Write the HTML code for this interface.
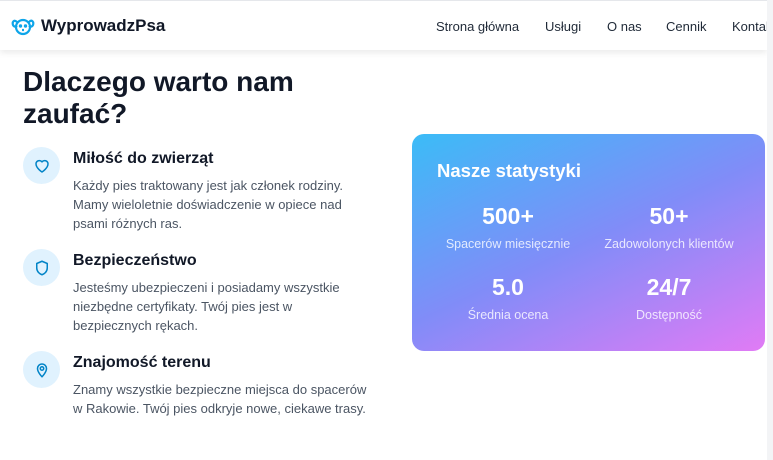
<!DOCTYPE html>
<html><head><meta charset="utf-8"><style>
*{margin:0;padding:0;box-sizing:border-box}
body{width:773px;height:460px;overflow:hidden;background:#fff;font-family:"Liberation Sans",sans-serif;position:relative;color:#111827}
.hdr{position:absolute;left:0;top:0;width:767px;height:50px;background:#fff;border-top:1px solid #e5e7eb;box-shadow:0 3px 6px rgba(0,0,0,.08);z-index:2}
.sb{position:absolute;right:0;top:0;width:6px;height:460px;background:#f3f4f6;z-index:3}
.logo{position:absolute;left:11px;top:13px}
.brand{position:absolute;left:41px;top:15px;font-size:17px;font-weight:bold;color:#111827}
.nav a{position:absolute;top:18px;font-size:13px;color:#1f2937;text-decoration:none;white-space:nowrap}
h1{position:absolute;left:23px;top:66px;font-size:28px;line-height:32px;font-weight:bold;color:#111827}
.it{position:absolute;left:23px}
.ic{position:absolute;left:0;top:0;width:37px;height:37px;border-radius:50%;background:#e0f2fe;display:flex;align-items:center;justify-content:center}
.t{position:absolute;left:50px;top:3px;font-size:16px;font-weight:bold;color:#111827;white-space:nowrap}
.d{position:absolute;left:50px;top:29px;white-space:nowrap;font-size:13px;line-height:19px;color:#4b5563}
.card{position:absolute;left:412px;top:134px;width:353px;height:217px;border-radius:12px;background:linear-gradient(155deg,#3bbcf7 0%,#818cf8 50%,#e17bf5 100%);color:#fff}
.card h2{position:absolute;left:25px;top:26px;font-size:18.5px;font-weight:bold}
.s{position:absolute;width:170px;text-align:center}
.s b{display:block;font-size:23px;line-height:26px}
.s span{display:block;font-size:12.5px;margin-top:8px;color:rgba(255,255,255,.8)}
</style></head><body>
<div class="hdr">
<svg class="logo" width="24" height="24" viewBox="0 0 24 24" fill="none" stroke="#0ea5e9" stroke-width="2.2"><circle cx="12" cy="13" r="7"/><path d="M6 8C3 5 1 8 2 11c1 2 3 2 4 1M18 8c3-3 5 0 4 3-1 2-3 2-4 1"/><circle cx="9.5" cy="12" r=".6" fill="#0ea5e9"/><circle cx="14.5" cy="12" r=".6" fill="#0ea5e9"/><path d="M11 16h2" /></svg>
<div class="brand">WyprowadzPsa</div>
<div class="nav"><a style="left:436px">Strona główna</a><a style="left:545px">Usługi</a><a style="left:607px">O nas</a><a style="left:666px">Cennik</a><a style="left:732px">Kontakt</a></div>
</div>
<div class="sb"></div>
<h1>Dlaczego warto nam<br>zaufać?</h1>
<div class="it" style="top:147px"><div class="ic"><svg width="18" height="18" viewBox="0 0 24 24" fill="none" stroke="#0284c7" stroke-width="2" stroke-linejoin="round"><path d="M12 20s-8-5-8-11a4.5 4.5 0 0 1 8-2.5A4.5 4.5 0 0 1 20 9c0 6-8 11-8 11z"/></svg></div><div class="t">Miłość do zwierząt</div><div class="d">Każdy pies traktowany jest jak członek rodziny.<br>Mamy wieloletnie doświadczenie w opiece nad<br>psami różnych ras.</div></div>
<div class="it" style="top:249px"><div class="ic"><svg width="18" height="18" viewBox="0 0 24 24" fill="none" stroke="#0284c7" stroke-width="2" stroke-linejoin="round"><path d="M12 3l7 3v6c0 5-4 8-7 9-3-1-7-4-7-9V6z"/></svg></div><div class="t">Bezpieczeństwo</div><div class="d">Jesteśmy ubezpieczeni i posiadamy wszystkie<br>niezbędne certyfikaty. Twój pies jest w<br>bezpiecznych rękach.</div></div>
<div class="it" style="top:351px"><div class="ic"><svg width="18" height="18" viewBox="0 0 24 24" fill="none" stroke="#0284c7" stroke-width="2"><path d="M12 21s-6-6-6-11a6 6 0 0 1 12 0c0 5-6 11-6 11z"/><circle cx="12" cy="10" r="2.3"/></svg></div><div class="t">Znajomość terenu</div><div class="d">Znamy wszystkie bezpieczne miejsca do spacerów<br>w Rakowie. Twój pies odkryje nowe, ciekawe trasy.</div></div>
<div class="card"><h2>Nasze statystyki</h2>
<div class="s" style="left:11px;top:69px"><b>500+</b><span>Spacerów miesięcznie</span></div>
<div class="s" style="left:172px;top:69px"><b>50+</b><span>Zadowolonych klientów</span></div>
<div class="s" style="left:11px;top:140px"><b>5.0</b><span>Średnia ocena</span></div>
<div class="s" style="left:172px;top:140px"><b>24/7</b><span>Dostępność</span></div>
</div>
</body></html>
